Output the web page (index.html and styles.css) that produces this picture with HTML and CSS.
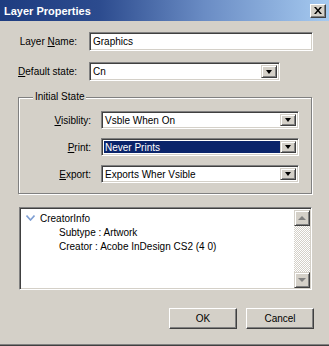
FILE: index.html
```html
<!DOCTYPE html>
<html lang="en">
<head>
    <meta charset="UTF-8">
    <title>Layer Properties</title>
    <link rel="stylesheet" href="styles.css">
</head>
<body>

<div class="window">
    <div class="titlebar">
        <span class="title">Layer Properties</span>
        <span class="close-btn">
            <svg width="8" height="7" viewBox="0 0 8 7"><path d="M0 0h2l2 2.5L6 0h2L5 3.5 8 7H6L4 4.5 2 7H0l3-3.5z" fill="#000"/></svg>
        </span>
    </div>

    <div class="content">
        <div class="row">
            <label class="label">Layer <u>N</u>ame:</label>
            <div class="textbox">Graphics</div>
        </div>

        <div class="row row-second">
            <label class="label"><u>D</u>efault state:</label>
            <div class="combo combo-short">
                <span class="combo-text">Cn</span>
                <span class="combo-btn"><i class="arrow"></i></span>
            </div>
        </div>

        <div class="group">
            <span class="group-title">Initial State</span>

            <div class="group-row">
                <label class="group-label"><u>V</u>isiblity:</label>
                <div class="combo combo-wide">
                    <span class="combo-text">Vsble When On</span>
                    <span class="combo-btn"><i class="arrow"></i></span>
                </div>
            </div>

            <div class="group-row">
                <label class="group-label"><u>P</u>rint:</label>
                <div class="combo combo-wide">
                    <span class="combo-text selected">Never Prints</span>
                    <span class="combo-btn"><i class="arrow"></i></span>
                </div>
            </div>

            <div class="group-row">
                <label class="group-label"><u>E</u>xport:</label>
                <div class="combo combo-wide">
                    <span class="combo-text">Exports Wher Vsible</span>
                    <span class="combo-btn"><i class="arrow"></i></span>
                </div>
            </div>
        </div>

        <div class="listbox">
            <div class="list-items">
                <div class="list-item">
                    <svg class="expander" width="9" height="6" viewBox="0 0 9 6"><path d="M0.5 0.5L4.5 5L8.5 0.5" fill="none" stroke="#7f9fd3" stroke-width="1.6"/></svg>
                    <span>CreatorInfo</span>
                </div>
                <div class="list-item child">Subtype : Artwork</div>
                <div class="list-item child">Creator : Acobe InDesign CS2 (4 0)</div>
            </div>
            <div class="scrollbar">
                <span class="scroll-btn"><i class="arrow-up"></i></span>
                <span class="scroll-track"></span>
                <span class="scroll-btn"><i class="arrow-down"></i></span>
            </div>
        </div>

        <div class="buttons">
            <button class="btn">OK</button>
            <button class="btn">Cancel</button>
        </div>
    </div>
</div>

</body>
</html>
```

FILE: styles.css
```css
body {
    margin: 0;
    font-family: 'Liberation Sans', Arial, sans-serif;
    font-size: 10px;
    color: #000;
    background-color: #d4d0c8;
}

.window {
    width: 329px;
    height: 346px;
    box-sizing: border-box;
    overflow: hidden;
    background-color: #d4d0c8;
    box-shadow: inset 0 -1px 0 #404040, inset 0 -2px 0 #808080;
}

/* title bar */
.titlebar {
    height: 21px;
    display: flex;
    align-items: center;
    justify-content: space-between;
    padding: 0 3px 0 4px;
    background: linear-gradient(to right, #1e3c80 0%, #2c4b8e 30%, #6a8cc4 62%, #a6caf0 100%);
}

.title {
    color: #fff;
    font-weight: bold;
    font-size: 11px;
}

.close-btn {
    width: 14px;
    height: 12px;
    display: flex;
    align-items: center;
    justify-content: center;
    background: #d4d0c8;
    border-top: 1px solid #fff;
    border-left: 1px solid #fff;
    border-right: 1px solid #404040;
    border-bottom: 1px solid #404040;
    box-shadow: inset -1px -1px 0 #808080;
}

/* form rows */
.content {
    padding-top: 11px;
}

.row {
    display: flex;
    align-items: center;
    height: 19px;
}

.row-second {
    margin-top: 11px;
}

.label {
    width: 77px;
    margin-right: 12px;
    text-align: right;
}

.textbox,
.combo {
    box-sizing: border-box;
    height: 19px;
    background: #fff;
    border-top: 1px solid #808080;
    border-left: 1px solid #808080;
    border-right: 1px solid #fff;
    border-bottom: 1px solid #fff;
    box-shadow: inset 1px 1px 0 #404040, inset -1px -1px 0 #d4d0c8;
}

.textbox {
    width: 224px;
    padding: 2px 3px;
    line-height: 13px;
}

.combo {
    display: flex;
    padding: 2px;
}

.combo-short {
    width: 191px;
}

.combo-wide {
    width: 198px;
}

.combo-text {
    flex: 1;
    padding-left: 1px;
    line-height: 13px;
}

.combo-text.selected {
    background: #0a246a;
    color: #fff;
}

.combo-btn {
    width: 16px;
    display: flex;
    align-items: center;
    justify-content: center;
    box-sizing: border-box;
    background: #d4d0c8;
    border-top: 1px solid #d4d0c8;
    border-left: 1px solid #d4d0c8;
    border-right: 1px solid #404040;
    border-bottom: 1px solid #404040;
    box-shadow: inset 1px 1px 0 #fff, inset -1px -1px 0 #808080;
}

.arrow {
    width: 0;
    height: 0;
    border-left: 3.5px solid transparent;
    border-right: 3.5px solid transparent;
    border-top: 4px solid #000;
}

/* group box */
.group {
    position: relative;
    width: 294px;
    height: 97px;
    box-sizing: border-box;
    margin: 16px 0 0 18px;
    padding-top: 13px;
    border: 1px solid #808080;
    box-shadow: 1px 1px 0 #fff, inset 1px 1px 0 #fff;
}

.group-title {
    position: absolute;
    top: -7px;
    left: 14px;
    padding: 0 2px;
    line-height: 12px;
    background: #d4d0c8;
}

.group-row {
    display: flex;
    align-items: center;
    height: 18px;
    margin-bottom: 9px;
}

.group-row .combo {
    height: 18px;
}

.group-label {
    width: 72px;
    margin-right: 10px;
    text-align: right;
}

/* list box */
.listbox {
    display: flex;
    width: 293px;
    height: 83px;
    box-sizing: border-box;
    margin: 13px 0 0 19px;
    background: #fff;
    border-top: 1px solid #808080;
    border-left: 1px solid #808080;
    border-right: 1px solid #fff;
    border-bottom: 1px solid #fff;
    box-shadow: inset 1px 1px 0 #404040, inset -1px -1px 0 #d4d0c8;
    padding: 2px 1px 1px 2px;
}

.list-items {
    flex: 1;
    padding-top: 1px;
}

.list-item {
    display: flex;
    align-items: center;
    height: 14px;
    padding-left: 4px;
}

.expander {
    margin-right: 5px;
}

.list-item.child {
    padding-left: 37px;
}

.scrollbar {
    width: 16px;
    display: flex;
    flex-direction: column;
}

.scroll-btn {
    height: 16px;
    box-sizing: border-box;
    display: flex;
    align-items: center;
    justify-content: center;
    background: #d4d0c8;
    border-top: 1px solid #d4d0c8;
    border-left: 1px solid #d4d0c8;
    border-right: 1px solid #404040;
    border-bottom: 1px solid #404040;
    box-shadow: inset 1px 1px 0 #fff, inset -1px -1px 0 #808080;
}

.scroll-track {
    flex: 1;
    background-image: conic-gradient(#d4d0c8 25%, #fff 0 50%, #d4d0c8 0 75%, #fff 0);
    background-size: 2px 2px;
}

.arrow-up,
.arrow-down {
    width: 0;
    height: 0;
    border-left: 4px solid transparent;
    border-right: 4px solid transparent;
}

.arrow-up {
    border-bottom: 4px solid #808080;
}

.arrow-down {
    border-top: 4px solid #808080;
}

/* buttons */
.buttons {
    display: flex;
    justify-content: flex-end;
    gap: 9px;
    margin: 18px 15px 0 0;
}

.btn {
    width: 68px;
    height: 21px;
    padding: 0;
    font-family: 'Liberation Sans', Arial, sans-serif;
    font-size: 10px;
    color: #000;
    background: #d4d0c8;
    border-top: 1px solid #fff;
    border-left: 1px solid #fff;
    border-right: 1px solid #404040;
    border-bottom: 1px solid #404040;
    box-shadow: inset -1px -1px 0 #808080;
    border-radius: 0;
}
```
